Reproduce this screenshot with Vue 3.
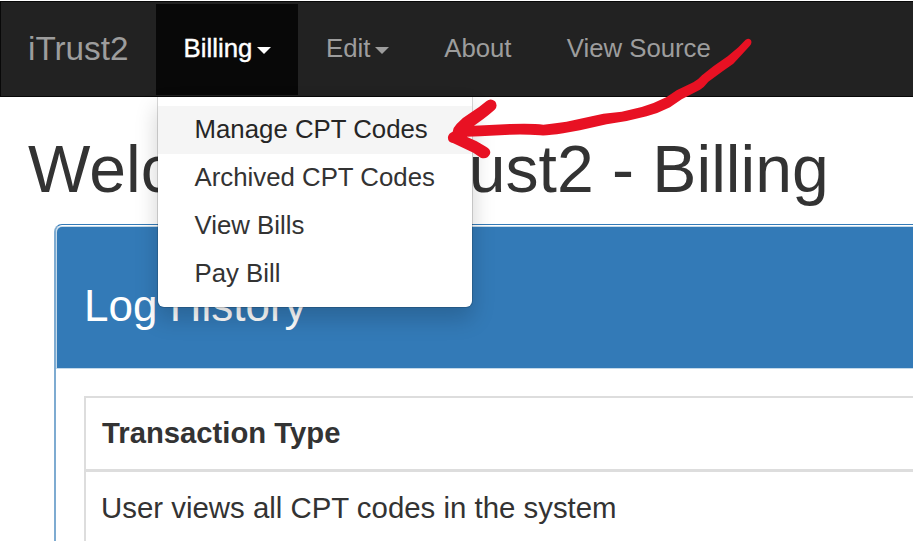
<script setup>
const navItems = [
  { label: 'Billing', caret: true, active: true },
  { label: 'Edit', caret: true },
  { label: 'About' },
  { label: 'View Source' },
]
const billingMenu = ['Manage CPT Codes', 'Archived CPT Codes', 'View Bills', 'Pay Bill']
const rows = ['User views all CPT codes in the system']
</script>

<template>
  <div class="page">
    <nav class="navbar">
      <a class="brand">iTrust2</a>
      <ul class="nav">
        <li v-for="item in navItems" :key="item.label" class="nav-item" :class="{ active: item.active }">
          <a class="nav-link">{{ item.label }}<span v-if="item.caret" class="caret"></span></a>
          <ul v-if="item.active" class="dropdown">
            <li v-for="(entry, i) in billingMenu" :key="entry" class="entry" :class="{ hovered: i === 0 }">{{ entry }}</li>
          </ul>
        </li>
      </ul>
    </nav>

    <main class="content">
      <h1 class="title">Welcome to iTrust2 - Billing</h1>
      <section class="panel">
        <header class="panel-heading"><h3>Log History</h3></header>
        <div class="panel-body">
          <div class="table">
            <div class="row head">Transaction Type</div>
            <div v-for="row in rows" :key="row" class="row">{{ row }}</div>
          </div>
        </div>
      </section>
    </main>

    <svg class="arrow" viewBox="0 0 1020 570" aria-hidden="true">
      <path
        d="M947 59 Q958 52 963 61 Q967 69 959 78 L935 104 L910 131 L880 152 L835 185 Q822 202 810 209
           L755 238 L720 262 Q685 280 650 289 L590 303 L530 313 L450 331 L400 340 Q350 348 330 346
           Q285 342 240 344 L150 349 L110 350 L140 364 L168 380 Q184 389 180 402 Q172 419 152 413
           L130 398 L100 384 L70 370 Q52 366 54 350 Q56 340 68 335 Q70 322 80 312 Q100 291 124 277
           Q148 262 169 244 Q182 233 195 244 Q205 257 194 269 Q177 284 160 297 L132 317
           L240 312 Q310 310 340 314 Q390 310 430 301 L520 281 L575 275 L635 261 Q675 249 710 231
           L740 211 L790 187 Q805 179 816 166 L850 139 L893 109 L925 82 Z"
      />
    </svg>
  </div>
</template>

<style>
body {
  margin: 0;
  background: #fff;
}
</style>

<style scoped>
.page {
  position: relative;
  width: 100%;
  height: 541px;
  overflow: hidden;
  font-family: "Liberation Sans", Arial, sans-serif;
  color: #333;
  background: #fff;
}
ul {
  list-style: none;
  margin: 0;
  padding: 0;
}
.navbar {
  box-sizing: border-box;
  display: flex;
  height: 96px;
  margin-top: 1px;
  border: 1px solid #080808;
  border-right: 0;
  background: #222;
  position: relative;
  z-index: 2;
}
.page::before {
  content: "";
  display: table;
}
.brand {
  box-sizing: border-box;
  width: 155px;
  padding-left: 27px;
  font-size: 33.3px;
  line-height: 93px;
  color: #9d9d9d;
}
.nav {
  display: flex;
}
.nav-item {
  position: relative;
}
.nav-link {
  display: flex;
  align-items: center;
  height: 93px;
  padding: 0 27.6px;
  font-size: 25.75px;
  color: #9d9d9d;
  white-space: nowrap;
}
.active .nav-link {
  box-sizing: border-box;
  height: 91px;
  margin-top: 2px;
  padding: 0 27.6px 2px;
  background: #080808;
  color: #fff;
  -webkit-text-stroke: 0.4px #fff;
}
.caret {
  margin: 4px 0 0 4.6px;
  border-top: 7.4px solid;
  border-left: 7.4px solid transparent;
  border-right: 7.4px solid transparent;
}
.dropdown {
  position: absolute;
  top: 95px;
  left: 1px;
  box-sizing: border-box;
  width: 316px;
  height: 211px;
  padding-top: 9px;
  border: 1px solid rgba(0, 0, 0, 0.15);
  border-top: 0;
  border-radius: 0 0 7px 7px;
  background: #fff;
  background-clip: padding-box;
  box-shadow: 0 11px 22px rgba(0, 0, 0, 0.175);
}
.entry {
  box-sizing: border-box;
  height: 48px;
  padding-left: 36.5px;
  font-size: 25.8px;
  line-height: 46px;
  white-space: nowrap;
}
.hovered {
  background: #f5f5f5;
  color: #262626;
}
.title {
  margin: 36px 0 0 28px;
  font-size: 66.1px;
  font-weight: 400;
  line-height: 73px;
  white-space: nowrap;
}
.panel {
  box-sizing: border-box;
  margin: 18px -20px 0 54px;
  height: 360px;
  border: 2px solid #337ab7;
  border-left-color: #7eabd1;
  border-top-width: 1px;
  border-radius: 8px;
}
.panel-heading {
  box-sizing: border-box;
  margin: 2px 0 0 1px;
  height: 141px;
  padding: 54px 0 0 27px;
  border-radius: 5px 0 0 0;
  background: #337ab7;
  color: #fff;
  box-shadow: 0 0 0 1px #c3d9ea;
}
.panel-heading h3 {
  margin: 0;
  font-size: 44px;
  font-weight: 400;
  line-height: 50px;
}
.panel-body {
  padding: 28px 0 0 28px;
}
.table {
  border: 2px solid #ddd;
}
.row {
  height: 72px;
  padding-left: 15px;
  font-size: 29.4px;
  line-height: 72px;
  white-space: nowrap;
}
.head {
  height: 71px;
  padding-left: 16px;
  font-size: 29.25px;
  line-height: 71px;
  font-weight: 700;
  border-bottom: 3px solid #ddd;
}
.arrow {
  position: absolute;
  z-index: 3;
  left: 430px;
  top: 20px;
  width: 340px;
  height: 190px;
  fill: #e81123;
}
</style>
